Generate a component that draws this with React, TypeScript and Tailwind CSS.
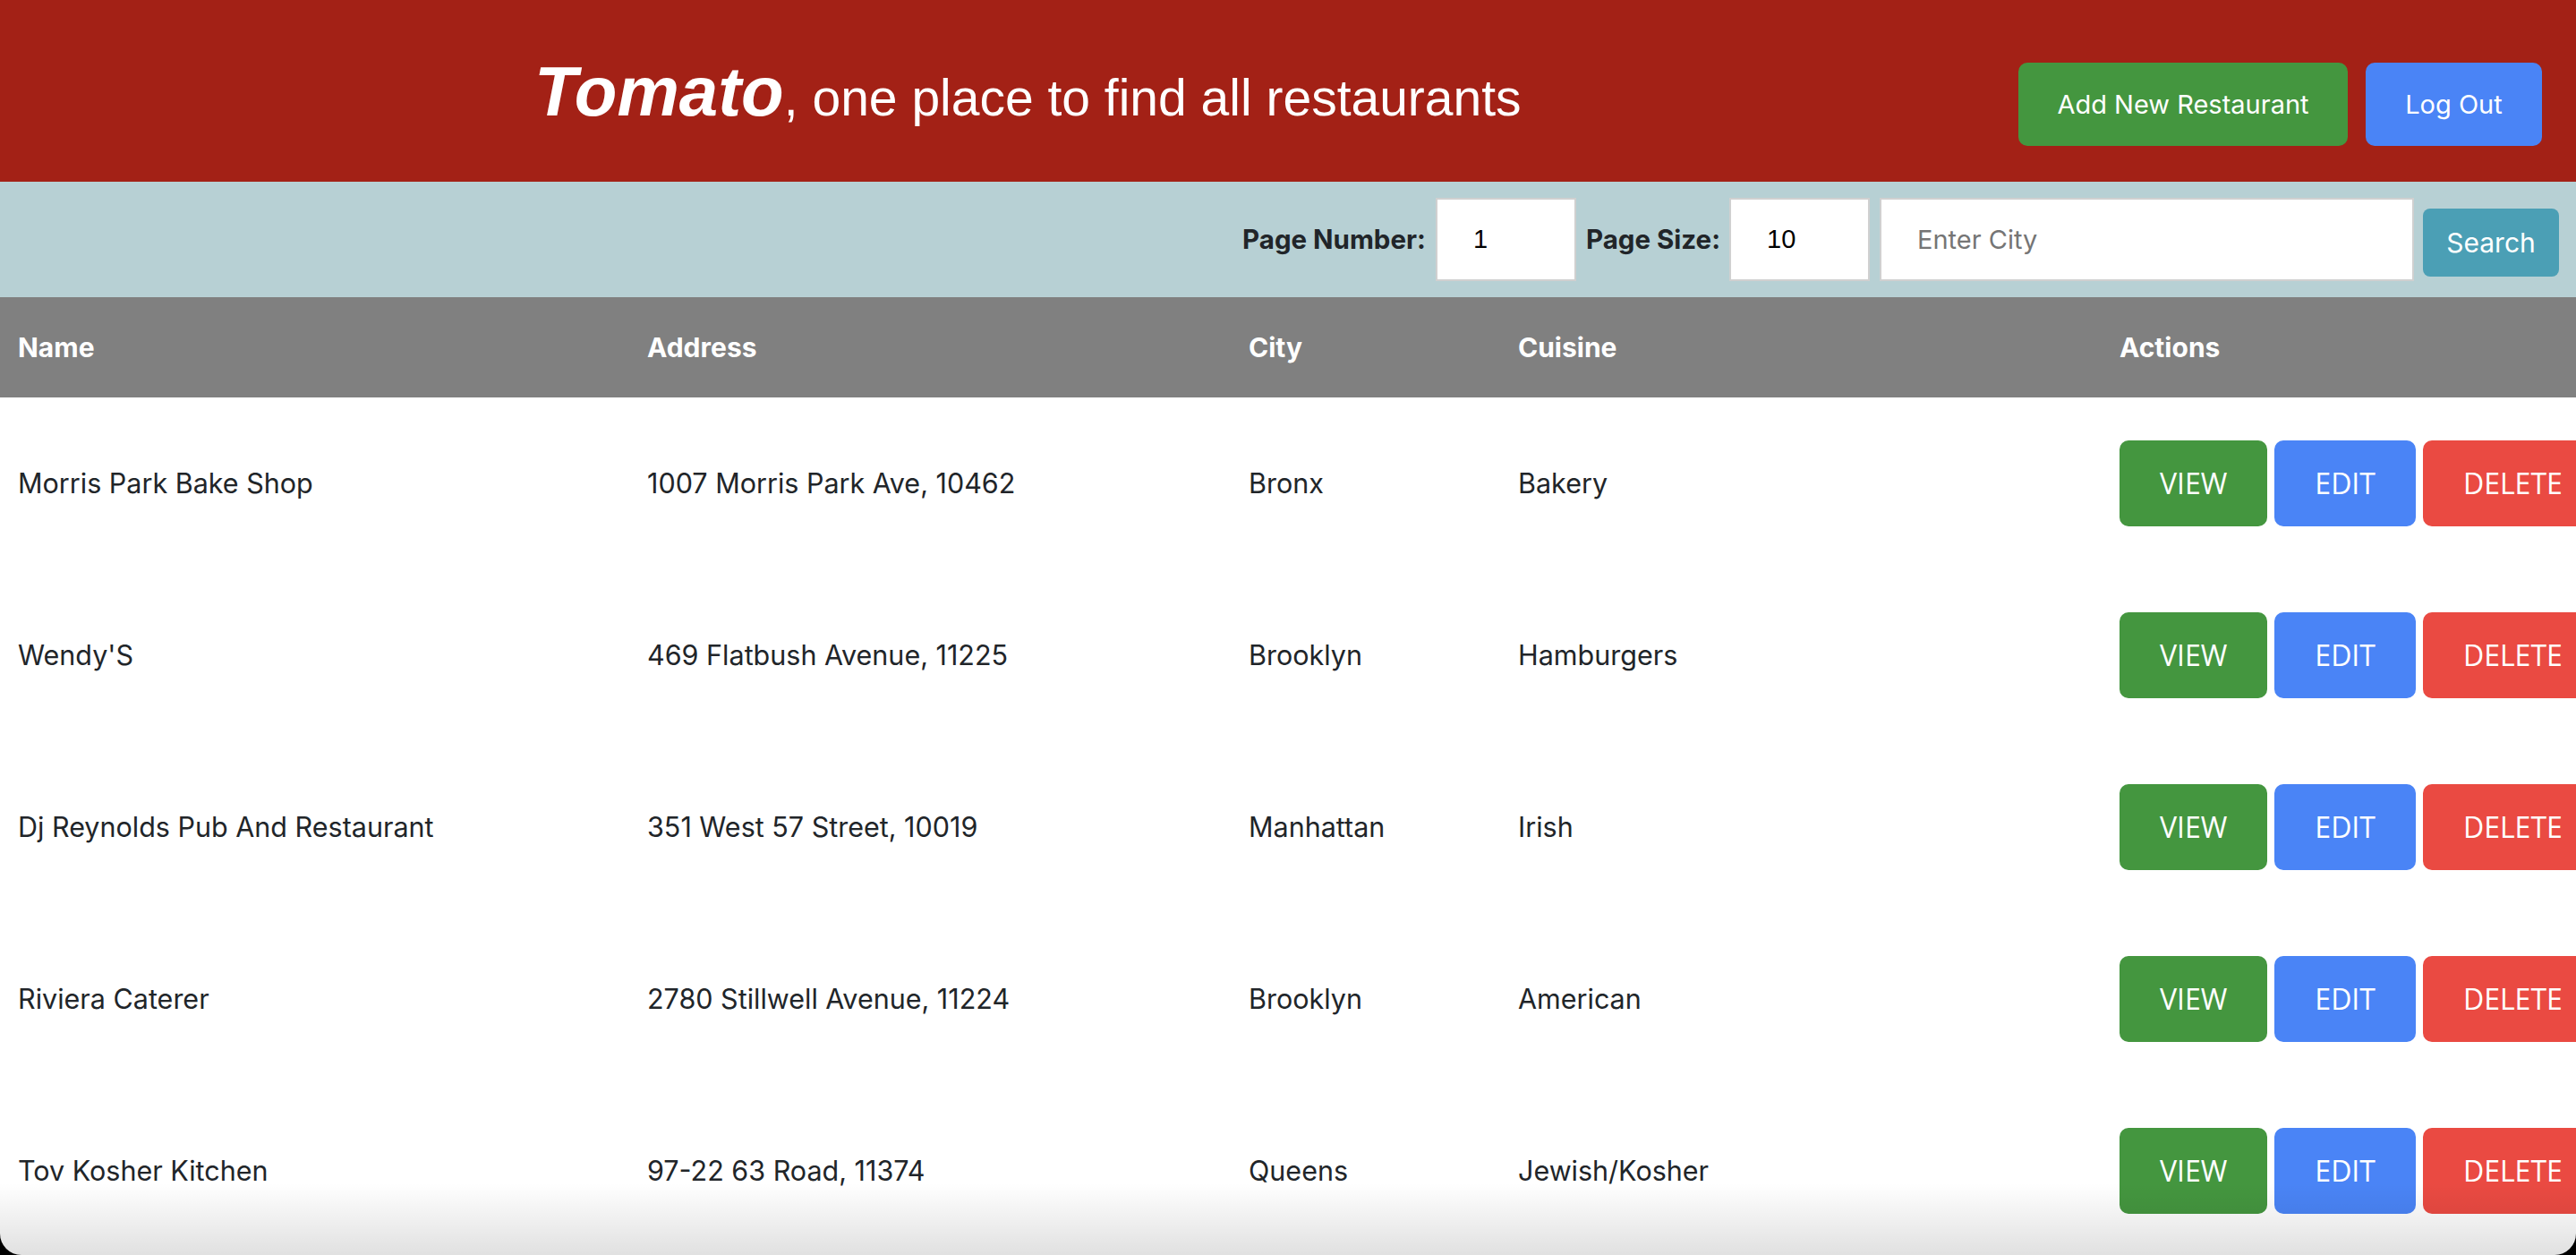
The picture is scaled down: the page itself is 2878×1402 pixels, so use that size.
import React from 'react';

type Restaurant = {
  name: string;
  address: string;
  city: string;
  cuisine: string;
};

const restaurants: Restaurant[] = [
  { name: 'Morris Park Bake Shop', address: '1007 Morris Park Ave, 10462', city: 'Bronx', cuisine: 'Bakery' },
  { name: "Wendy'S", address: '469 Flatbush Avenue, 11225', city: 'Brooklyn', cuisine: 'Hamburgers' },
  { name: 'Dj Reynolds Pub And Restaurant', address: '351 West 57 Street, 10019', city: 'Manhattan', cuisine: 'Irish' },
  { name: 'Riviera Caterer', address: '2780 Stillwell Avenue, 11224', city: 'Brooklyn', cuisine: 'American' },
  { name: 'Tov Kosher Kitchen', address: '97-22 63 Road, 11374', city: 'Queens', cuisine: 'Jewish/Kosher' },
];

export default function App() {
  return (
    <main className="min-h-screen bg-black font-['Inter',sans-serif]">
      <div className="relative h-[1402px] overflow-hidden rounded-b-[24px] bg-white">
        <header className="flex h-[203px] items-center bg-[#a32116] pl-[597px] pr-[38px]">
          <h1 className="whitespace-nowrap font-['Liberation_Sans',Arial,sans-serif] leading-none text-white">
            <span className="text-[78px] font-bold italic">Tomato</span>
            <span className="text-[57px]">, one place to find all restaurants</span>
          </h1>
          <div className="ml-auto mt-[30px] flex gap-[20px]">
            <button className="h-[93px] w-[368px] rounded-[10px] bg-[#44963f] text-[29px] text-white">
              Add New Restaurant
            </button>
            <button className="h-[93px] w-[197px] rounded-[10px] bg-[#4a84f6] text-[29px] text-white">
              Log Out
            </button>
          </div>
        </header>

        <div className="flex h-[129px] items-center justify-end bg-[#b7d0d4] pr-[19px] text-[#212529]">
          <label className="mr-[11px] text-[29.5px] font-bold">Page Number:</label>
          <input
            readOnly
            value="1"
            className="mr-[11px] h-[93px] w-[157px] border-2 border-[#d0d0d0] bg-white pl-[40px] font-['Liberation_Sans',Arial,sans-serif] text-[29px] text-black outline-none"
          />
          <label className="mr-[10px] text-[29.5px] font-bold">Page Size:</label>
          <input
            readOnly
            value="10"
            className="mr-[11px] h-[93px] w-[157px] border-2 border-[#d0d0d0] bg-white pl-[40px] font-['Liberation_Sans',Arial,sans-serif] text-[29px] text-black outline-none"
          />
          <input
            readOnly
            placeholder="Enter City"
            className="mr-[10px] h-[93px] w-[597px] border-2 border-[#d0d0d0] bg-white pl-[40px] text-[29px] outline-none placeholder:text-[#757575]"
          />
          <button className="mt-[7px] h-[76px] w-[152px] rounded-[8px] bg-[#4b9fb5] text-[30px] text-white">
            Search
          </button>
        </div>

        <table className="w-[2929px] table-fixed border-collapse">
          <colgroup>
            <col className="w-[703px]" />
            <col className="w-[672px]" />
            <col className="w-[301px]" />
            <col className="w-[672px]" />
            <col className="w-[581px]" />
          </colgroup>
          <thead>
            <tr className="h-[112px] bg-[#808080] text-left text-[30px] font-bold text-white">
              <th className="pl-[20px]">Name</th>
              <th className="pl-[20px]">Address</th>
              <th className="pl-[20px]">City</th>
              <th className="pl-[20px]">Cuisine</th>
              <th className="pl-[20px]">Actions</th>
            </tr>
          </thead>
          <tbody>
            {restaurants.map((r) => (
              <tr key={r.name} className="h-[192px] text-[30.5px] text-[#212529]">
                <td className="pl-[20px]">{r.name}</td>
                <td className="pl-[20px]">{r.address}</td>
                <td className="pl-[20px]">{r.city}</td>
                <td className="pl-[20px]">{r.cuisine}</td>
                <td className="pl-[20px]">
                  <div className="flex gap-[8px] font-['Open_Sans',sans-serif] text-[32px] text-white">
                    <button className="h-[96px] rounded-[10px] bg-[#44963f] px-[45px]">VIEW</button>
                    <button className="h-[96px] rounded-[10px] bg-[#4a84f6] px-[45px]">EDIT</button>
                    <button className="h-[96px] rounded-[10px] bg-[#ea4a42] px-[45px]">DELETE</button>
                  </div>
                </td>
              </tr>
            ))}
          </tbody>
        </table>

        {/* window shadow along the bottom edge */}
        <div className="pointer-events-none absolute inset-x-0 bottom-0 h-[80px] bg-linear-to-b from-transparent to-black/12" />
      </div>
    </main>
  );
}
